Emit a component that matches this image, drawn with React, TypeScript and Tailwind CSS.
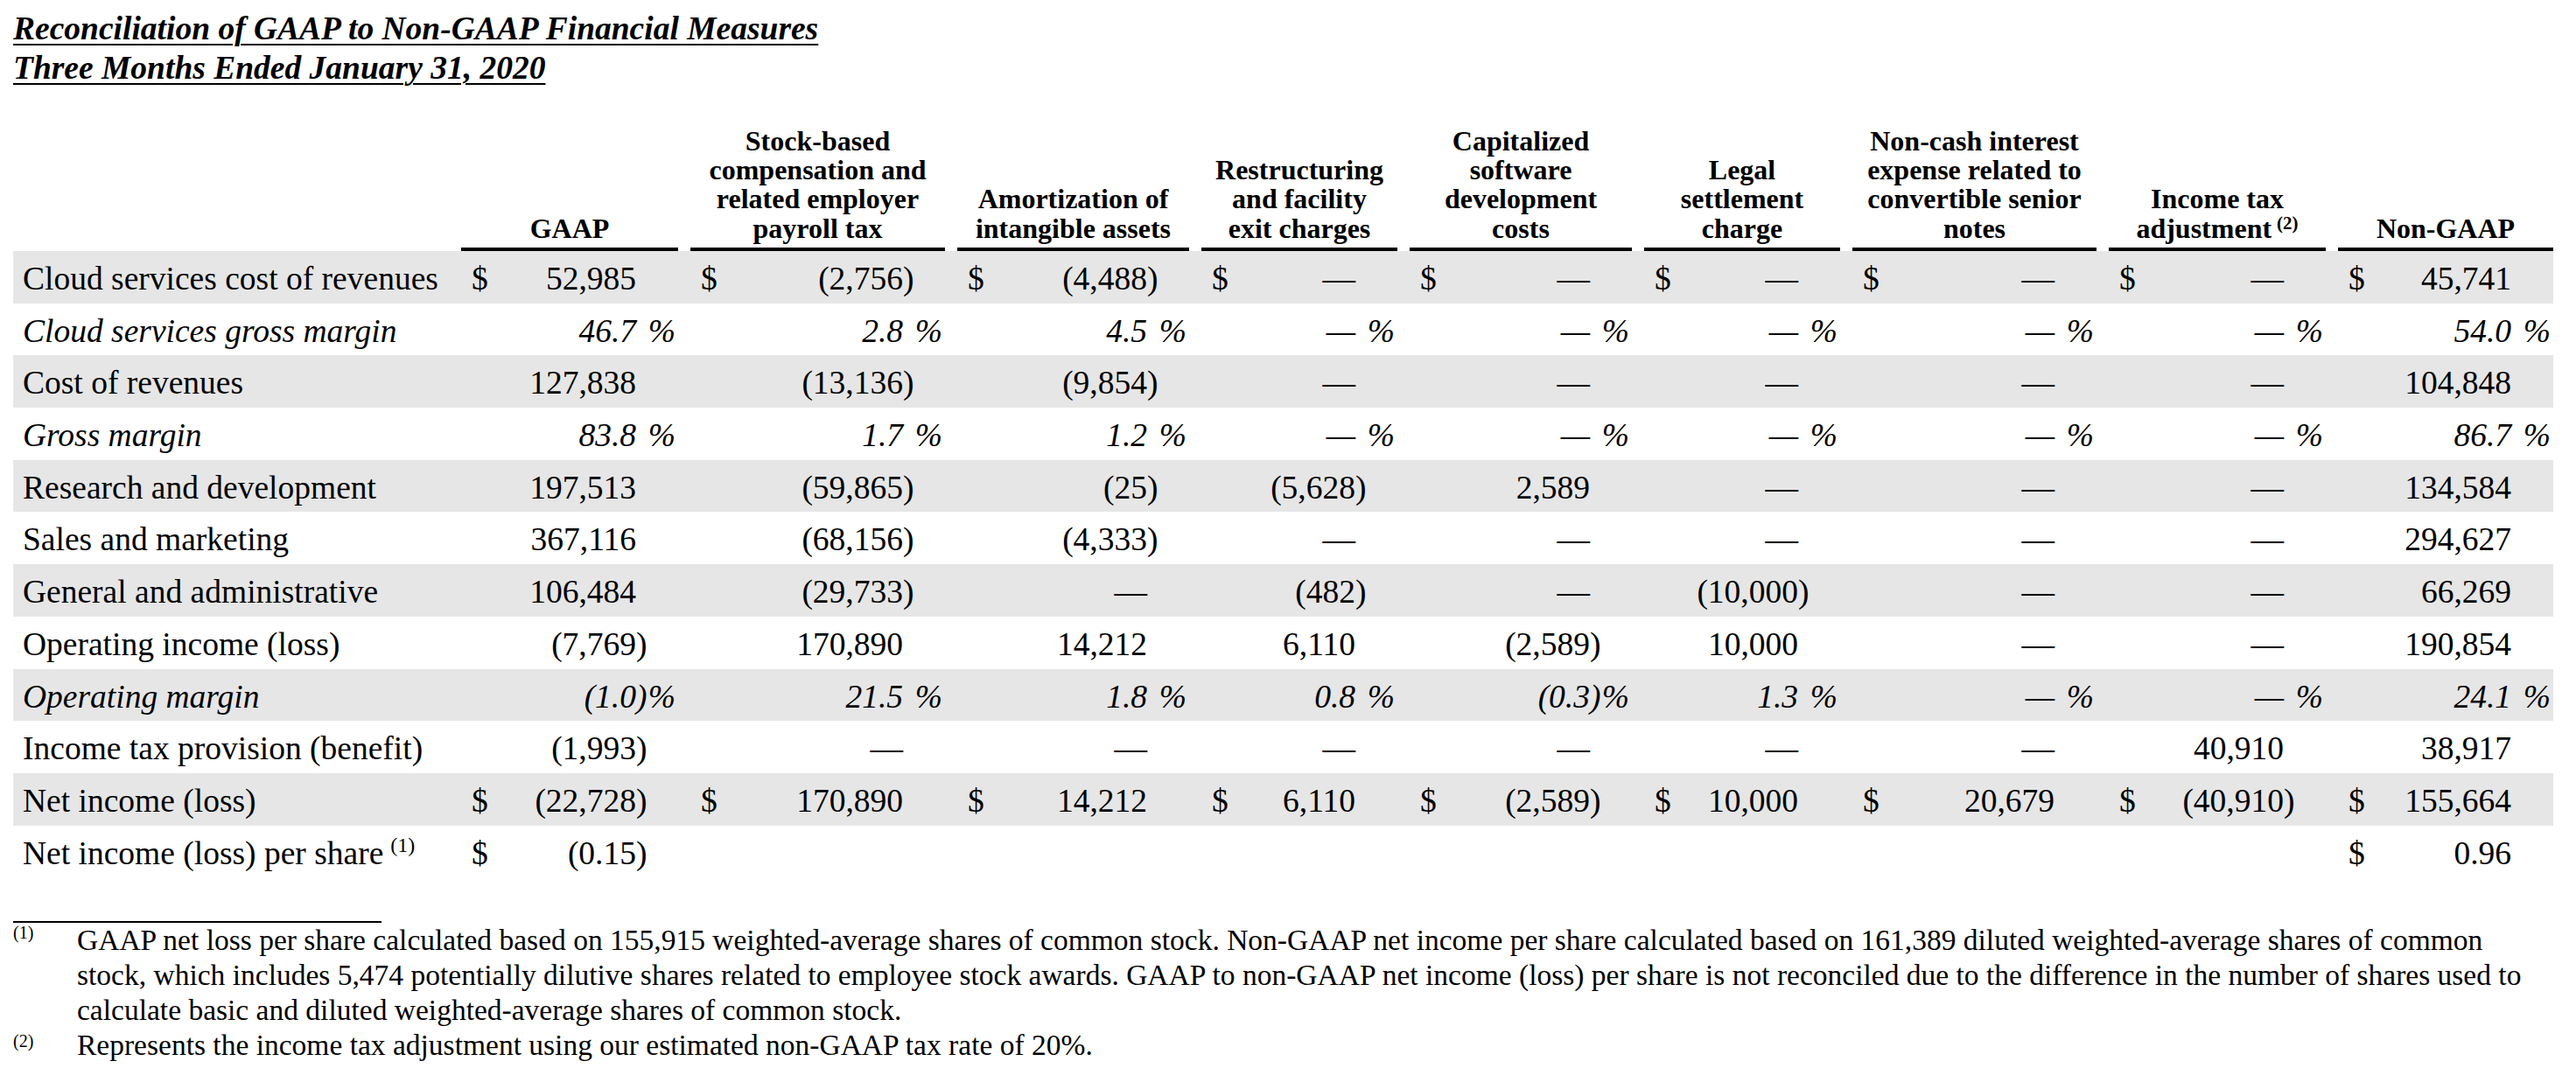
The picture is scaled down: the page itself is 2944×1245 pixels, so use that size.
import clsx from "clsx";

type Row = {
  label: string;
  italic?: boolean;
  dollar?: boolean;
  note?: string;
  cells: string[];
};

const headers: { lines: string[]; note?: string }[] = [
  { lines: ["GAAP"] },
  { lines: ["Stock-based", "compensation and", "related employer", "payroll tax"] },
  { lines: ["Amortization of", "intangible assets"] },
  { lines: ["Restructuring", "and facility", "exit charges"] },
  { lines: ["Capitalized", "software", "development", "costs"] },
  { lines: ["Legal", "settlement", "charge"] },
  { lines: ["Non-cash interest", "expense related to", "convertible senior", "notes"] },
  { lines: ["Income tax", "adjustment"], note: "(2)" },
  { lines: ["Non-GAAP"] },
];

const rows: Row[] = [
  {
    label: "Cloud services cost of revenues",
    dollar: true,
    cells: ["52,985", "(2,756)", "(4,488)", "—", "—", "—", "—", "—", "45,741"],
  },
  {
    label: "Cloud services gross margin",
    italic: true,
    cells: ["46.7%", "2.8%", "4.5%", "—%", "—%", "—%", "—%", "—%", "54.0%"],
  },
  {
    label: "Cost of revenues",
    cells: ["127,838", "(13,136)", "(9,854)", "—", "—", "—", "—", "—", "104,848"],
  },
  {
    label: "Gross margin",
    italic: true,
    cells: ["83.8%", "1.7%", "1.2%", "—%", "—%", "—%", "—%", "—%", "86.7%"],
  },
  {
    label: "Research and development",
    cells: ["197,513", "(59,865)", "(25)", "(5,628)", "2,589", "—", "—", "—", "134,584"],
  },
  {
    label: "Sales and marketing",
    cells: ["367,116", "(68,156)", "(4,333)", "—", "—", "—", "—", "—", "294,627"],
  },
  {
    label: "General and administrative",
    cells: ["106,484", "(29,733)", "—", "(482)", "—", "(10,000)", "—", "—", "66,269"],
  },
  {
    label: "Operating income (loss)",
    cells: ["(7,769)", "170,890", "14,212", "6,110", "(2,589)", "10,000", "—", "—", "190,854"],
  },
  {
    label: "Operating margin",
    italic: true,
    cells: ["(1.0)%", "21.5%", "1.8%", "0.8%", "(0.3)%", "1.3%", "—%", "—%", "24.1%"],
  },
  {
    label: "Income tax provision (benefit)",
    cells: ["(1,993)", "—", "—", "—", "—", "—", "—", "40,910", "38,917"],
  },
  {
    label: "Net income (loss)",
    dollar: true,
    cells: ["(22,728)", "170,890", "14,212", "6,110", "(2,589)", "10,000", "20,679", "(40,910)", "155,664"],
  },
  {
    label: "Net income (loss) per share",
    note: "(1)",
    dollar: true,
    cells: ["(0.15)", "", "", "", "", "", "", "", "0.96"],
  },
];

const grid =
  "grid grid-cols-[498px_248px_291px_265px_224px_254px_224px_279px_248px_246px] gap-x-[14px]";

function Cell({ value, dollar }: { value: string; dollar?: boolean }) {
  if (!value) return <div />;
  const pct = value.endsWith("%");
  let body = pct ? value.slice(0, -1) : value;
  let paren = false;
  if (body.endsWith(")")) {
    body = body.slice(0, -1);
    paren = true;
  }

  return (
    <div className="flex pl-[12px]">
      {dollar && <span>$</span>}
      <span className="ml-auto whitespace-nowrap">{body}</span>
      <span className="flex w-[48px] pr-[3px]">
        {paren && <span>)</span>}
        {pct && <span className="ml-auto">%</span>}
      </span>
    </div>
  );
}

export default function App() {
  return (
    <div className="min-h-screen w-[2944px] bg-white pl-[15px] font-['Liberation_Serif','Times_New_Roman',serif] text-black">
      {/* Title */}
      <div className="pt-[10px] text-[37.5px] leading-[45px] font-bold italic">
        <div>
          <span className="underline decoration-2 underline-offset-[5px]">
            Reconciliation of GAAP to Non-GAAP Financial Measures
          </span>
        </div>
        <div>
          <span className="underline decoration-2 underline-offset-[5px]">
            Three Months Ended January 31, 2020
          </span>
        </div>
      </div>

      {/* Column headers */}
      <div className={clsx(grid, "h-[187px] w-[2903px] text-[32px] leading-[33.3px] font-bold")}>
        <div />
        {headers.map((h, i) => (
          <div
            key={i}
            className="flex flex-col items-center justify-end border-b-4 border-black pb-[5px] text-center"
          >
            {h.lines.map((line, j) => (
              <div key={j} className="whitespace-nowrap">
                {line}
                {h.note && j === h.lines.length - 1 && (
                  <span className="ml-[6px] align-[10px] text-[21px] leading-none">{h.note}</span>
                )}
              </div>
            ))}
          </div>
        ))}
      </div>

      {/* Rows */}
      <div className="w-[2903px] text-[37.5px]">
        {rows.map((row, i) => (
          <div
            key={row.label}
            className={clsx(
              grid,
              "h-[59.7px] pt-[7px] leading-[50px]",
              i % 2 === 0 && "bg-[#e6e6e6]",
              row.italic && "italic"
            )}
          >
            <div className="whitespace-nowrap pl-[11px]">
              {row.label}
              {row.note && (
                <span className="ml-[8px] align-[14px] text-[24px] leading-none">{row.note}</span>
              )}
            </div>
            {row.cells.map((c, j) => (
              <Cell key={j} value={c} dollar={row.dollar} />
            ))}
          </div>
        ))}
      </div>

      {/* Footnotes */}
      <div className="mt-[50px] h-[2px] w-[421px] bg-black" />
      <div className="text-[33.5px] leading-[40px]">
        <div className="flex">
          <div className="w-[73px] shrink-0 pt-[1px] text-[20px] leading-[20px]">(1)</div>
          <div className="whitespace-nowrap">
            <div>
              GAAP net loss per share calculated based on 155,915 weighted-average shares of common stock. Non-GAAP
              net income per share calculated based on 161,389 diluted weighted-average shares of common
            </div>
            <div>
              stock, which includes 5,474 potentially dilutive shares related to employee stock awards. GAAP to
              non-GAAP net income (loss) per share is not reconciled due to the difference in the number of shares
              used to
            </div>
            <div>calculate basic and diluted weighted-average shares of common stock.</div>
          </div>
        </div>
        <div className="flex">
          <div className="w-[73px] shrink-0 pt-[5px] text-[20px] leading-[20px]">(2)</div>
          <div className="whitespace-nowrap">
            Represents the income tax adjustment using our estimated non-GAAP tax rate of 20%.
          </div>
        </div>
      </div>
    </div>
  );
}
